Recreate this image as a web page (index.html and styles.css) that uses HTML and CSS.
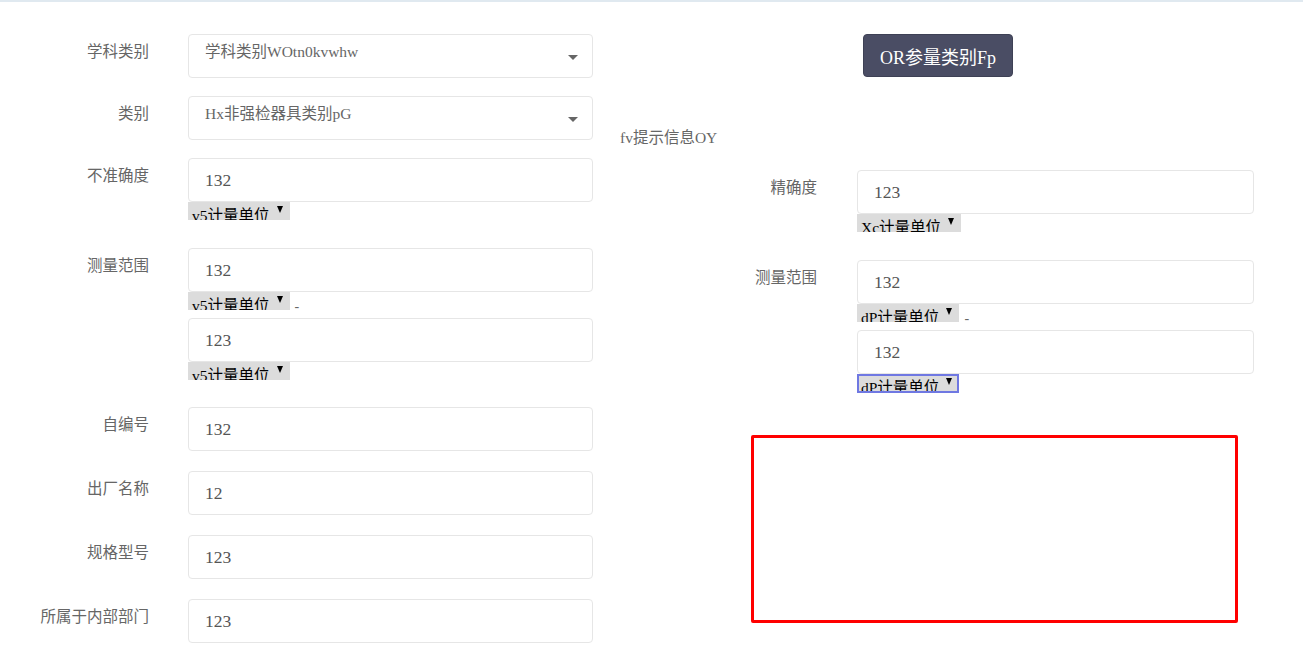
FILE: index.html
```html
<!DOCTYPE html>
<html lang="zh-CN">
<head>
  <meta charset="UTF-8">
  <meta name="viewport" content="width=device-width, initial-scale=1.0">
  <title>器具信息</title>
  <link rel="stylesheet" href="styles.css">
</head>
<body>
  <div class="page">
    <!-- left form -->
    <div class="col-left">
      <div class="row row-select">
        <label class="label">学科类别</label>
        <div class="control">
          <div class="select"><span class="select-text">学科类别WOtn0kvwhw</span><i class="caret"></i></div>
        </div>
      </div>
      <div class="row row-select">
        <label class="label">类别</label>
        <div class="control">
          <div class="select"><span class="select-text">Hx非强检器具类别pG</span><i class="caret"></i></div>
        </div>
      </div>
      <div class="row">
        <label class="label">不准确度</label>
        <div class="control">
          <div class="input">132</div>
          <div class="unit-line"><span class="unit"><span class="unit-text">v5计量单位</span><i class="unit-caret"></i></span></div>
        </div>
      </div>
      <div class="row row-range">
        <label class="label">测量范围</label>
        <div class="control">
          <div class="input">132</div>
          <div class="unit-line"><span class="unit"><span class="unit-text">v5计量单位</span><i class="unit-caret"></i></span><span class="dash">-</span></div>
          <div class="input">123</div>
          <div class="unit-line"><span class="unit"><span class="unit-text">v5计量单位</span><i class="unit-caret"></i></span></div>
        </div>
      </div>
      <div class="row">
        <label class="label">自编号</label>
        <div class="control"><div class="input">132</div></div>
      </div>
      <div class="row">
        <label class="label">出厂名称</label>
        <div class="control"><div class="input">12</div></div>
      </div>
      <div class="row">
        <label class="label">规格型号</label>
        <div class="control"><div class="input">123</div></div>
      </div>
      <div class="row">
        <label class="label">所属于内部部门</label>
        <div class="control"><div class="input">123</div></div>
      </div>
    </div>

    <!-- right form -->
    <div class="col-right">
      <div class="btn-wrap">
        <button class="btn-dark">OR参量类别Fp</button>
      </div>
      <div class="hint">fv提示信息OY</div>
      <div class="row">
        <label class="label label-wide">精确度</label>
        <div class="control control-narrow">
          <div class="input">123</div>
          <div class="unit-line"><span class="unit"><span class="unit-text">Xc计量单位</span><i class="unit-caret"></i></span></div>
        </div>
      </div>
      <div class="row">
        <label class="label label-wide">测量范围</label>
        <div class="control control-narrow">
          <div class="input">132</div>
          <div class="unit-line"><span class="unit"><span class="unit-text">dP计量单位</span><i class="unit-caret"></i></span><span class="dash">-</span></div>
          <div class="input">132</div>
          <div class="unit-line"><span class="unit unit-focus"><span class="unit-text">dP计量单位</span><i class="unit-caret"></i></span></div>
        </div>
      </div>
      <div class="red-box"></div>
    </div>
  </div>
</body>
</html>
```

FILE: styles.css
```css
body {
  margin: 0;
  border-top: 2px solid #e0e9f0;
  background: #fff;
  font-family: "Liberation Serif", "Noto Sans CJK SC", serif;
  color: #666;
}

.page {
  display: flex;
  padding-top: 32px;
}

.col-left {
  width: 620px;
  flex-shrink: 0;
}

.col-right {
  width: 636px;
  flex-shrink: 0;
}

.row {
  display: flex;
  margin-bottom: 20px;
}

.row-select {
  margin-bottom: 18px;
}

.row-range {
  margin-bottom: 19px;
}

.label {
  box-sizing: border-box;
  width: 188px;
  padding-right: 39px;
  padding-top: 8px;
  text-align: right;
  font-size: 15.5px;
  line-height: 20px;
  color: #666;
}

.label-wide {
  width: 237px;
  padding-right: 40px;
}

.control {
  width: 405px;
}

.control-narrow {
  width: 397px;
}

.input,
.select {
  box-sizing: border-box;
  height: 44px;
  border: 1px solid #e6e6e6;
  border-radius: 4px;
  padding: 0 16px;
  background: #fff;
}

.input {
  font-size: 17.5px;
  line-height: 42px;
  color: #555;
}

.select {
  display: flex;
  align-items: center;
  justify-content: space-between;
  padding-right: 14px;
}

.select-text {
  font-size: 15.5px;
  color: #666;
  margin-top: -12px;
}

.caret {
  width: 0;
  height: 0;
  margin-top: 2px;
  border-left: 5px solid transparent;
  border-right: 5px solid transparent;
  border-top: 5px solid #666;
}

.unit-line {
  height: 26px;
  display: flex;
  align-items: flex-start;
}

.unit {
  box-sizing: border-box;
  display: inline-flex;
  align-items: flex-start;
  height: 18px;
  padding: 0 7px 0 4px;
  background: #dcdcdc;
  color: #000;
  overflow: hidden;
}

.unit-text {
  font-size: 15.5px;
  line-height: 18px;
  padding-top: 5px;
}

.unit-caret {
  width: 0;
  height: 0;
  margin: 4px 0 0 7px;
  border-left: 3px solid transparent;
  border-right: 3px solid transparent;
  border-top: 7px solid #000;
}

.unit-focus {
  border: 2px solid #6f78e2;
  padding-left: 2px;
  padding-right: 5px;
  height: 19px;
}

.unit-focus .unit-text {
  padding-top: 3px;
}

.unit-focus .unit-caret {
  margin-top: 2px;
}

.dash {
  font-size: 14px;
  color: #666;
  margin-left: 5px;
  line-height: 30px;
}

.btn-wrap {
  display: flex;
  justify-content: center;
}

.btn-dark {
  box-sizing: border-box;
  height: 43px;
  padding: 0 16px;
  border: 1px solid #3e4155;
  border-radius: 4px;
  background: #4a4d64;
  color: #fff;
  font-family: "Liberation Serif", "Noto Sans CJK SC", serif;
  font-size: 18px;
}

.hint {
  margin-top: 51px;
  margin-bottom: 22px;
  font-size: 15.5px;
  line-height: 20px;
  color: #666;
}

.red-box {
  box-sizing: border-box;
  width: 487px;
  height: 188px;
  margin: 35px 0 0 131px;
  border: 3px solid #ff0000;
  border-radius: 2px;
}
```
